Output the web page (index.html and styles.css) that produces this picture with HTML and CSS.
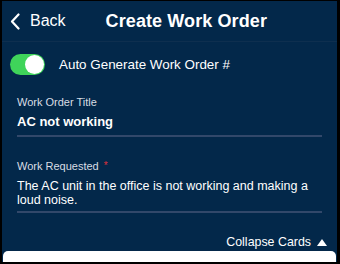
FILE: index.html
```html
<!DOCTYPE html>
<html>
<head>
<meta charset="utf-8">
<link rel="stylesheet" href="styles.css">
</head>
<body>
<div class="frame">
  <header class="nav">
    <div class="back">
      <svg class="chev" width="10" height="17" viewBox="0 0 10 17"><path d="M8.5 1.5 L2 8.5 L8.5 15.5" fill="none" stroke="#fff" stroke-width="2.2" stroke-linecap="round" stroke-linejoin="round"/></svg>
      <span>Back</span>
    </div>
    <div class="title">Create Work Order</div>
  </header>
  <div class="toggle-row">
    <div class="switch"><div class="knob"></div></div>
    <span class="toggle-label">Auto Generate Work Order #</span>
  </div>
  <div class="field first">
    <div class="label">Work Order Title</div>
    <div class="value bold">AC not working</div>
  </div>
  <div class="field second">
    <div class="label">Work Requested <span class="req">*</span></div>
    <div class="value multi">The AC unit in the office is not working and making a loud noise.</div>
  </div>
  <div class="collapse">Collapse Cards <span class="tri"></span></div>
  <div class="card"></div>
</div>
</body>
</html>
```

FILE: styles.css
```css
html, body { margin: 0; padding: 0; background: #000; }
body { width: 340px; height: 264px; overflow: hidden; font-family: "Liberation Sans", Arial, sans-serif; }
.frame {
  margin: 1px 3px 0 2px;
  height: 261px;
  background: #03284a;
  overflow: hidden;
  color: #fff;
  display: flex;
  flex-direction: column;
}
.frame > * { flex-shrink: 0; }
.nav {
  height: 41px;
  border-bottom: 1px solid #0e2f4f;
  display: flex;
  align-items: center;
  box-sizing: border-box;
  padding-left: 8px;
}
.back { display: flex; align-items: center; gap: 10px; font-size: 16px; }
.chev { display: block; }
.title { margin-left: 40px; font-size: 18px; font-weight: bold; letter-spacing: 0.1px; }
.toggle-row { display: flex; align-items: center; padding: 12px 0 0 8px; height: 21px; }
.switch {
  width: 35px; height: 21px; border-radius: 11px; background: #3fd45a;
  position: relative; box-sizing: border-box;
}
.knob { position: absolute; right: 1px; top: 1px; width: 19px; height: 19px; border-radius: 50%; background: #fff; }
.toggle-label { margin-left: 14px; font-size: 13.4px; }
.field { margin: 0 15px 0 15px; border-bottom: 2px solid #32486a; }
.first { padding: 20px 0 4px 0; }
.second { padding: 22px 0 4px 0; }
.label { font-size: 11px; color: #d8dde4; line-height: 14px; }
.req { color: #e0313c; vertical-align: top; font-size: 10px; margin-left: 2px; }
.value { font-size: 13px; line-height: 18px; padding-top: 4px; }
.bold { font-weight: bold; }
.multi { font-size: 12.5px; line-height: 14px; padding-top: 6px; }
.collapse { padding: 21px 10px 0 0; height: 16px; font-size: 12.4px; line-height: 16px; display: flex; justify-content: flex-end; align-items: center; gap: 6px; }
.tri { width: 0; height: 0; border-left: 5px solid transparent; border-right: 5px solid transparent; border-bottom: 7px solid #fff; }
.card { margin: 1px 1px 0 1px; background: #fff; height: 20px; border-radius: 5px 5px 0 0; }
```
